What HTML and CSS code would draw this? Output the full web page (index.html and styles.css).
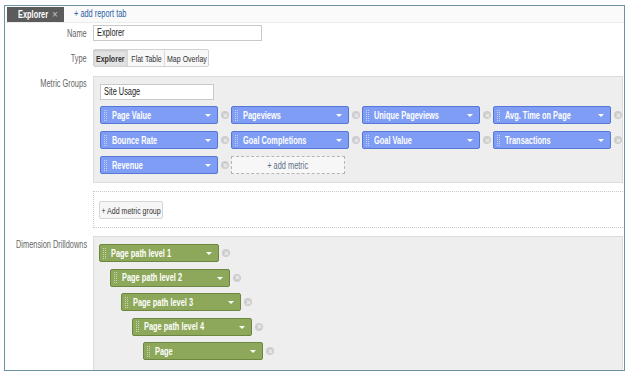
FILE: index.html
```html
<!DOCTYPE html>
<html>
<head>
<meta charset="utf-8">
<link rel="stylesheet" href="styles.css">
</head>
<body>
<div class="frame">
  <div class="tabbar">
    <div class="tab"><span class="t tab-name">Explorer</span><span class="tab-close">×</span></div>
    <a class="add-tab"><span class="t">+ add report tab</span></a>
  </div>
  <div class="form">
    <div class="label"><span class="t tr">Name</span></div>
    <div class="field"><div class="input name-input"><span class="t">Explorer</span></div></div>

    <div class="label"><span class="t tr">Type</span></div>
    <div class="field">
      <div class="btn-group">
        <span class="seg active w1"><span class="t tc">Explorer</span></span><span class="seg w2"><span class="t tc">Flat Table</span></span><span class="seg w3"><span class="t tc">Map Overlay</span></span>
      </div>
    </div>

    <div class="label lbl-top"><span class="t tr">Metric Groups</span></div>
    <div class="field shift">
      <div class="panel metric-panel">
        <div class="input group-input"><span class="t">Site Usage</span></div>
        <div class="metric-grid">
          <div class="item"><div class="chip blue"><span class="grip"></span><span class="chip-text"><span class="t">Page Value</span></span><span class="caret"></span></div><span class="rm"></span></div>
          <div class="item"><div class="chip blue"><span class="grip"></span><span class="chip-text"><span class="t">Pageviews</span></span><span class="caret"></span></div><span class="rm"></span></div>
          <div class="item"><div class="chip blue"><span class="grip"></span><span class="chip-text"><span class="t">Unique Pageviews</span></span><span class="caret"></span></div><span class="rm"></span></div>
          <div class="item"><div class="chip blue"><span class="grip"></span><span class="chip-text"><span class="t">Avg. Time on Page</span></span><span class="caret"></span></div><span class="rm"></span></div>
          <div class="item"><div class="chip blue"><span class="grip"></span><span class="chip-text"><span class="t">Bounce Rate</span></span><span class="caret"></span></div><span class="rm"></span></div>
          <div class="item"><div class="chip blue"><span class="grip"></span><span class="chip-text"><span class="t">Goal Completions</span></span><span class="caret"></span></div><span class="rm"></span></div>
          <div class="item"><div class="chip blue"><span class="grip"></span><span class="chip-text"><span class="t">Goal Value</span></span><span class="caret"></span></div><span class="rm"></span></div>
          <div class="item"><div class="chip blue"><span class="grip"></span><span class="chip-text"><span class="t">Transactions</span></span><span class="caret"></span></div><span class="rm"></span></div>
          <div class="item"><div class="chip blue"><span class="grip"></span><span class="chip-text"><span class="t">Revenue</span></span><span class="caret"></span></div><span class="rm"></span></div>
          <div class="item"><div class="add-metric"><span class="t tc">+ add metric</span></div></div>
        </div>
      </div>
      <div class="add-group-box">
        <span class="add-group-btn"><span class="t tc">+ Add metric group</span></span>
      </div>
    </div>

    <div class="label lbl-top"><span class="t tr">Dimension Drilldowns</span></div>
    <div class="field">
      <div class="panel dim-panel">
        <div class="drill lvl0"><div class="chip green"><span class="grip"></span><span class="chip-text"><span class="t">Page path level 1</span></span><span class="caret"></span></div><span class="rm"></span></div>
        <div class="drill lvl1"><div class="chip green"><span class="grip"></span><span class="chip-text"><span class="t">Page path level 2</span></span><span class="caret"></span></div><span class="rm"></span></div>
        <div class="drill lvl2"><div class="chip green"><span class="grip"></span><span class="chip-text"><span class="t">Page path level 3</span></span><span class="caret"></span></div><span class="rm"></span></div>
        <div class="drill lvl3"><div class="chip green"><span class="grip"></span><span class="chip-text"><span class="t">Page path level 4</span></span><span class="caret"></span></div><span class="rm"></span></div>
        <div class="drill lvl4"><div class="chip green"><span class="grip"></span><span class="chip-text"><span class="t">Page</span></span><span class="caret"></span></div><span class="rm"></span></div>
      </div>
    </div>
  </div>
</div>
</body>
</html>
```

FILE: styles.css
```css
* { box-sizing: border-box; }
html, body { margin: 0; padding: 0; background: #ffffff; }
body {
  font-family: "Liberation Sans", Arial, sans-serif;
  font-size: 10px;
  color: #333;
}
/* condensed text rendering, matching the narrow type of the original */
.t {
  display: inline-block;
  flex: none;
  white-space: nowrap;
  transform: scaleX(0.74);
  transform-origin: left center;
}
.tr { transform-origin: right center; }
.tc { transform-origin: center center; }

.frame {
  margin: 5px 0 0 4px;
  width: 621px;
  height: 366px;
  border: 1px solid #6e93a6;
  overflow: hidden;
  background: #fff;
}
.tabbar {
  height: 17px;
  background: #fafafa;
  border-bottom: 1px solid #ececec;
  display: flex;
  align-items: flex-start;
  padding-left: 2px;
}
.tab {
  margin-top: 1px;
  height: 15px;
  width: 57px;
  background: #5b5b5b;
  color: #fff;
  display: flex;
  align-items: center;
  padding-left: 11px;
}
.tab-name { font-weight: bold; width: 30px; }
.tab-close { color: #c4c4c4; margin-left: 4px; font-size: 10px; }
.add-tab {
  color: #2b5ea8;
  margin-left: 10px;
  line-height: 16px;
  font-size: 10px;
}
.form {
  display: grid;
  grid-template-columns: 82px 1fr;
  column-gap: 6px;
  row-gap: 8px;
  padding-top: 2px;
  padding-right: 1px;
}
.label {
  color: #666;
  font-size: 10px;
  display: flex;
  align-items: center;
  justify-content: flex-end;
}
.lbl-top { align-items: flex-start; padding-top: 3px; }
.field { min-width: 0; }
.shift { margin-top: 1px; }
.input {
  height: 16px;
  border: 1px solid #c9c9c9;
  background: #fff;
  padding-left: 3px;
  line-height: 14px;
  color: #222;
  font-size: 10px;
}
.name-input { width: 169px; }
.btn-group {
  display: inline-flex;
  border: 1px solid #d2d2d2;
  border-radius: 2px;
  height: 18px;
  background: #f8f8f8;
}
.seg {
  display: flex;
  justify-content: center;
  align-items: center;
  color: #333;
  font-size: 9.5px;
  border-left: 1px solid #dadada;
  overflow: hidden;
}
.seg:first-child { border-left: none; }
.w1 { width: 33px; }
.w2 { width: 37px; }
.w3 { width: 44px; }
.seg.active { background: #e2e2e2; font-weight: bold; box-shadow: inset 0 1px 2px rgba(0,0,0,0.12); }
.panel {
  background: #eeeeee;
  border: 1px solid #dcdcdc;
}
.metric-panel {
  height: 107px;
  padding: 7px 0 0 6px;
}
.group-input { width: 114px; }
.metric-grid {
  margin-top: 6px;
  display: grid;
  grid-template-columns: repeat(4, 131px);
  row-gap: 7px;
}
.item { display: flex; align-items: center; }
.chip {
  --chip: #7f9df4;
  display: flex;
  align-items: center;
  height: 18px;
  width: 118px;
  border-radius: 2px;
  color: #fff;
  font-weight: bold;
  font-size: 10px;
  background: var(--chip);
}
.chip.blue { --chip: #7f9df4; border: 1px solid #5677d4; }
.chip.green { --chip: #8ea85b; border: 1px solid #6c8740; width: 120px; }
.grip {
  width: 3px;
  height: 11px;
  margin-left: 3px;
  background-image:
    linear-gradient(to bottom, transparent 1px, var(--chip) 1px),
    linear-gradient(to right, rgba(255,255,255,0.55) 1px, transparent 1px);
  background-size: 2px 2px, 2px 2px;
}
.chip-text { margin-left: 5px; flex: 1; min-width: 0; }
.caret {
  width: 0; height: 0;
  border-left: 3px solid transparent;
  border-right: 3px solid transparent;
  border-top: 3px solid #fff;
  margin-right: 6px;
  margin-top: 1px;
}
.rm {
  width: 8px;
  height: 8px;
  border-radius: 50%;
  background: #cdcdcd;
  margin-left: 3px;
  position: relative;
}
.rm::before, .rm::after {
  content: "";
  position: absolute;
  left: 1.5px; top: 3.5px;
  width: 5px; height: 1px;
  background: #f4f4f4;
  transform: rotate(45deg);
}
.rm::after { transform: rotate(-45deg); }
.add-metric {
  width: 114px;
  height: 18px;
  border: 1px dashed #b5b5b5;
  background: #f7f7f7;
  color: #5f6f88;
  display: flex;
  justify-content: center;
  align-items: center;
  font-size: 10px;
}
.add-group-box {
  margin-top: 8px;
  height: 37px;
  border-top: 1px dotted #c8c8c8;
  border-bottom: 1px dotted #c8c8c8;
  border-left: 1px dotted #c8c8c8;
  padding: 9px 0 0 5px;
}
.add-group-btn {
  display: flex;
  justify-content: center;
  align-items: center;
  height: 18px;
  width: 64px;
  border: 1px solid #d6d6d6;
  border-radius: 2px;
  background: #f6f6f6;
  color: #333;
  font-size: 9.5px;
  overflow: hidden;
}
.dim-panel {
  height: 140px;
  padding: 7px 0 0 5px;
}
.drill { display: flex; align-items: center; margin-bottom: 6.5px; }
.lvl1 { margin-left: 11px; }
.lvl2 { margin-left: 22px; }
.lvl3 { margin-left: 33px; }
.lvl4 { margin-left: 44px; }
```
